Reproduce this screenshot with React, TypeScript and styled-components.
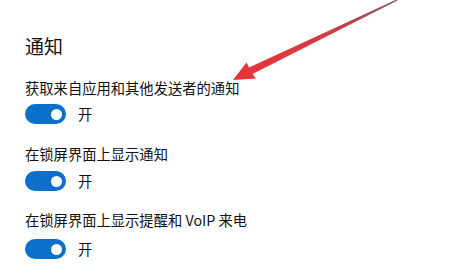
import React from "react";
import styled, { createGlobalStyle } from "styled-components";

const Global = createGlobalStyle`
  html, body { margin: 0; padding: 0; background: #ffffff; }
  body { font-family: "Noto Sans CJK SC", "Noto Sans", "Liberation Sans", sans-serif; color: #111; }
`;

const Page = styled.div`
  position: relative;
  width: 467px;
  height: 277px;
  overflow: hidden;
  box-sizing: border-box;
  padding: 34px 0 0 25px;
  background: #fff;
`;

const Heading = styled.h2`
  margin: 0;
  font-size: 19px;
  line-height: 24px;
  font-weight: 400;
  color: #111;
`;

const Section = styled.section<{ $top: number; $gap: number }>`
  display: flex;
  flex-direction: column;
  gap: ${(p) => p.$gap}px;
  margin-top: ${(p) => p.$top}px;
`;

const Label = styled.div`
  font-size: 14.3px;
  line-height: 20px;
  color: #111;
  white-space: nowrap;
`;

const ToggleRow = styled.div`
  display: flex;
  align-items: center;
  gap: 12px;
  height: 20px;
`;

const Track = styled.div`
  width: 41px;
  height: 20px;
  border-radius: 10px;
  background: #0b6fcc;
  box-sizing: border-box;
  display: flex;
  align-items: center;
  justify-content: flex-end;
  padding: 0 4px;
`;

const Knob = styled.div`
  width: 11px;
  height: 11px;
  border-radius: 50%;
  background: #fff;
`;

const State = styled.span`
  font-size: 14.3px;
  line-height: 20px;
  color: #111;
`;

const ArrowLayer = styled.svg`
  position: absolute;
  left: 0;
  top: 0;
  pointer-events: none;
`;

function Toggle() {
  return (
    <ToggleRow>
      <Track>
        <Knob />
      </Track>
      <State>开</State>
    </ToggleRow>
  );
}

const items = [
  { label: "获取来自应用和其他发送者的通知", top: 20, gap: 6 },
  { label: "在锁屏界面上显示通知", top: 20, gap: 7 },
  { label: "在锁屏界面上显示提醒和 VoIP 来电", top: 19, gap: 9 },
];

export default function App() {
  return (
    <>
      <Global />
      <Page>
        <Heading>通知</Heading>
        {items.map((it) => (
          <Section key={it.label} $top={it.top} $gap={it.gap}>
            <Label>{it.label}</Label>
            <Toggle />
          </Section>
        ))}
        <ArrowLayer width="467" height="277" viewBox="0 0 467 277">
          <defs>
            <linearGradient id="ar" x1="233" y1="80" x2="397" y2="0" gradientUnits="userSpaceOnUse">
              <stop offset="0" stopColor="#e8333a" />
              <stop offset="0.6" stopColor="#d63a44" />
              <stop offset="1" stopColor="#7a5a66" />
            </linearGradient>
            <filter id="soft" x="-10%" y="-10%" width="120%" height="120%">
              <feGaussianBlur stdDeviation="0.6" />
            </filter>
          </defs>
          <polygon
            filter="url(#soft)"
            fill="url(#ar)"
            points="233,80 246.5,62.5 249,67.5 396.5,-0.5 397.5,0.5 252.5,74 256,78.5"
          />
        </ArrowLayer>
      </Page>
    </>
  );
}
